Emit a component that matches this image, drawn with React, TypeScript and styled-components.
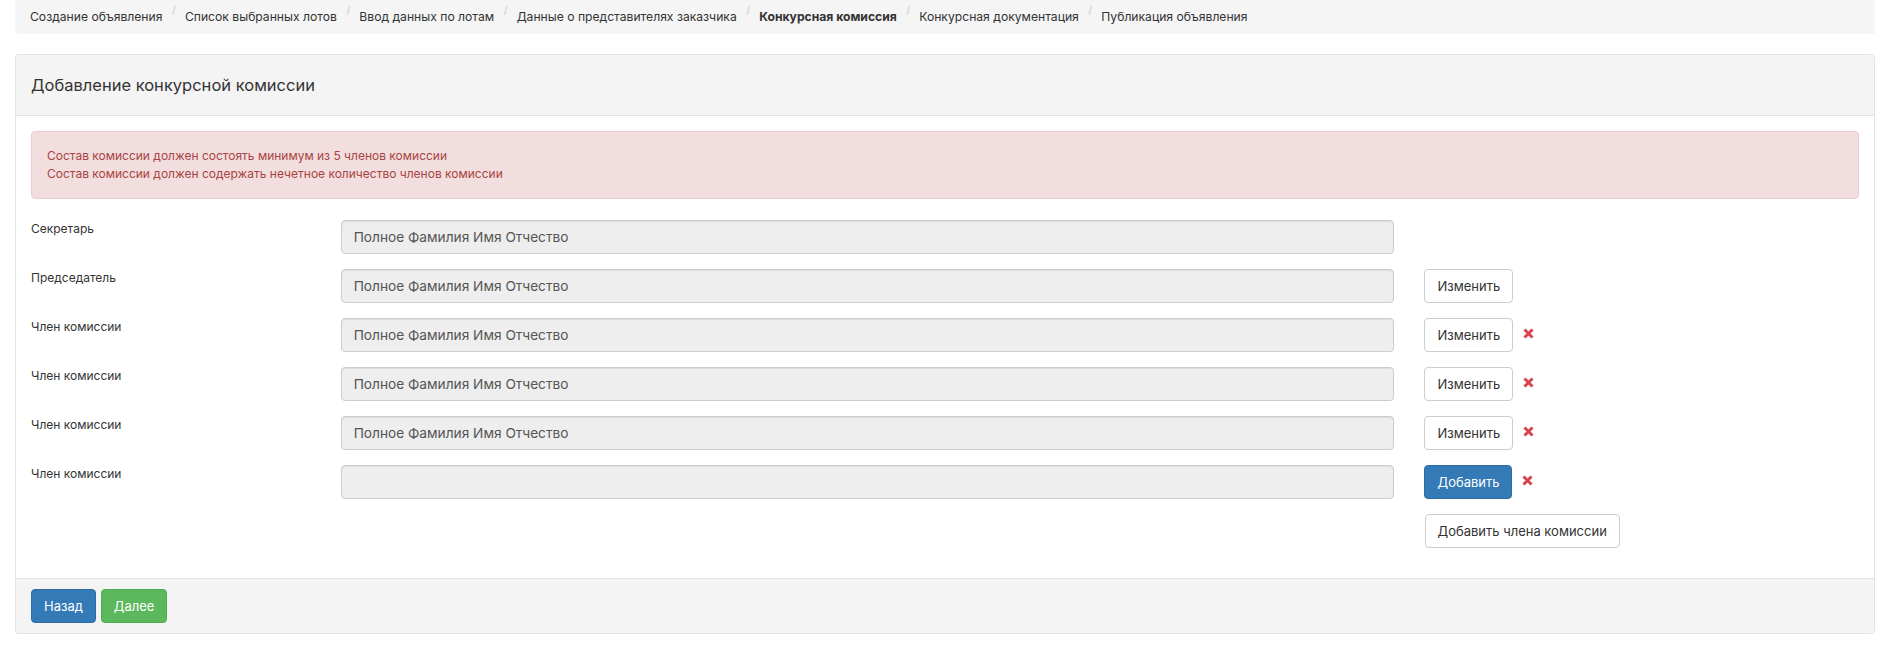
import React from "react";
import styled, { createGlobalStyle } from "styled-components";

const GlobalStyle = createGlobalStyle`
  * { box-sizing: border-box; }
  html, body { margin: 0; padding: 0; background: #fff; }
  body {
    font-family: Inter, "Liberation Sans", sans-serif;
    color: #333;
    font-size: 13.7px;
  }
`;

const Page = styled.div`
  padding: 0 15px;
`;

const Breadcrumb = styled.ol`
  display: flex;
  align-items: center;
  height: 34px;
  margin: 0 0 20px;
  padding: 0 15px;
  list-style: none;
  background: #f5f5f5;
  border-radius: 0 0 4px 4px;
`;

const Crumb = styled.li<{ $active?: boolean }>`
  display: flex;
  align-items: center;
  font-size: 12.15px;
  line-height: 18px;
  color: #333;
  font-weight: ${(p) => (p.$active ? 700 : 400)};

  &:not(:first-child)::before {
    content: "/";
    position: relative;
    top: -7px;
    padding: 0 9px 0 9.5px;
    font-size: 11px;
    font-weight: 400;
    color: #ccc;
  }
`;

const Panel = styled.section`
  border: 1px solid #e2e2e2;
  border-radius: 4px;
  background: #fff;
  box-shadow: 0 1px 1px rgba(0, 0, 0, 0.05);
  overflow: hidden;
`;

const PanelHeading = styled.header`
  display: flex;
  align-items: center;
  height: 61px;
  padding: 0 15px;
  background: #f4f4f4;
  border-bottom: 1px solid #e3e3e3;
`;

const PanelTitle = styled.h3`
  margin: 0;
  font-size: 16.5px;
  font-weight: 400;
  color: #333;
`;

const PanelBody = styled.div`
  padding: 15px;
`;

const Alert = styled.div`
  margin-bottom: 21px;
  padding: 15px;
  font-size: 12px;
  line-height: 18px;
  color: #a94442;
  background: #f2dede;
  border: 1px solid #ebccd1;
  border-radius: 4px;
`;

const FormRow = styled.div`
  display: flex;
  margin: 0 -15px 15px;
`;

const Col = styled.div<{ $span: number; $offset?: number }>`
  flex: 0 0 ${(p) => (p.$span / 12) * 100}%;
  max-width: ${(p) => (p.$span / 12) * 100}%;
  margin-left: ${(p) => ((p.$offset ?? 0) / 12) * 100}%;
  padding: 0 15px;
`;

const ActionCol = styled(Col)`
  display: flex;
  align-items: center;
  height: 34px;
`;

const Label = styled.label`
  display: block;
  font-size: 12px;
  line-height: 18px;
  color: #333;
`;

const Input = styled.input`
  display: block;
  width: 100%;
  height: 34px;
  padding: 6px 12px;
  font-family: inherit;
  font-size: 13.7px;
  color: #555;
  background: #eee;
  border: 1px solid #ccc;
  border-radius: 4px;
  box-shadow: inset 0 1px 1px rgba(0, 0, 0, 0.075);
  opacity: 1;
  -webkit-text-fill-color: #555;
`;

type Variant = "default" | "primary" | "success";

const colors: Record<Variant, { bg: string; border: string; fg: string }> = {
  default: { bg: "#fff", border: "#ccc", fg: "#333" },
  primary: { bg: "#337ab7", border: "#2e6da4", fg: "#fff" },
  success: { bg: "#5cb85c", border: "#4cae4c", fg: "#fff" },
};

const Button = styled.button<{ $variant?: Variant }>`
  display: inline-flex;
  align-items: center;
  height: 34px;
  padding: 0 12px;
  font-family: inherit;
  font-size: 13px;
  line-height: 20px;
  white-space: nowrap;
  cursor: pointer;
  border-radius: 4px;
  color: ${(p) => colors[p.$variant ?? "default"].fg};
  background: ${(p) => colors[p.$variant ?? "default"].bg};
  border: 1px solid ${(p) => colors[p.$variant ?? "default"].border};
`;

const RemoveButton = styled.button`
  display: inline-flex;
  align-items: center;
  justify-content: center;
  margin: -3px 0 0 9px;
  padding: 0;
  width: 12px;
  height: 12px;
  background: none;
  border: 0;
  cursor: pointer;
`;

const PanelFooter = styled.footer`
  display: flex;
  gap: 5px;
  padding: 10px 15px;
  background: #f4f4f4;
  border-top: 1px solid #e3e3e3;
`;

const RemoveIcon = () => (
  <svg width="11" height="11" viewBox="0 0 11 11" aria-hidden="true">
    <path d="M1.5 1.5 L9.5 9.5 M9.5 1.5 L1.5 9.5" stroke="#d9434e" strokeWidth="3" strokeLinecap="butt" />
  </svg>
);

const steps = [
  "Создание объявления",
  "Список выбранных лотов",
  "Ввод данных по лотам",
  "Данные о представителях заказчика",
  "Конкурсная комиссия",
  "Конкурсная документация",
  "Публикация объявления",
];

type Member = { role: string; name: string; action?: "edit" | "add"; removable?: boolean };

const members: Member[] = [
  { role: "Секретарь", name: "Полное Фамилия Имя Отчество" },
  { role: "Председатель", name: "Полное Фамилия Имя Отчество", action: "edit" },
  { role: "Член комиссии", name: "Полное Фамилия Имя Отчество", action: "edit", removable: true },
  { role: "Член комиссии", name: "Полное Фамилия Имя Отчество", action: "edit", removable: true },
  { role: "Член комиссии", name: "Полное Фамилия Имя Отчество", action: "edit", removable: true },
  { role: "Член комиссии", name: "", action: "add", removable: true },
];

export default function App() {
  return (
    <>
      <GlobalStyle />
      <Page>
        <Breadcrumb>
          {steps.map((s, i) => (
            <Crumb key={s} $active={i === 4}>
              {s}
            </Crumb>
          ))}
        </Breadcrumb>

        <Panel>
          <PanelHeading>
            <PanelTitle>Добавление конкурсной комиссии</PanelTitle>
          </PanelHeading>
          <PanelBody>
            <Alert>
              <div>Состав комиссии должен состоять минимум из 5 членов комиссии</div>
              <div>Состав комиссии должен содержать нечетное количество членов комиссии</div>
            </Alert>

            {members.map((m, i) => (
              <FormRow key={i}>
                <Col $span={2}>
                  <Label>{m.role}</Label>
                </Col>
                <Col $span={7}>
                  <Input disabled value={m.name} readOnly />
                </Col>
                <ActionCol $span={3}>
                  {m.action === "edit" && <Button>Изменить</Button>}
                  {m.action === "add" && <Button $variant="primary">Добавить</Button>}
                  {m.removable && (
                    <RemoveButton aria-label="Удалить">
                      <RemoveIcon />
                    </RemoveButton>
                  )}
                </ActionCol>
              </FormRow>
            ))}

            <FormRow>
              <ActionCol $span={3} $offset={9}>
                <Button>Добавить члена комиссии</Button>
              </ActionCol>
            </FormRow>
          </PanelBody>
          <PanelFooter>
            <Button $variant="primary">Назад</Button>
            <Button $variant="success">Далее</Button>
          </PanelFooter>
        </Panel>
      </Page>
    </>
  );
}
